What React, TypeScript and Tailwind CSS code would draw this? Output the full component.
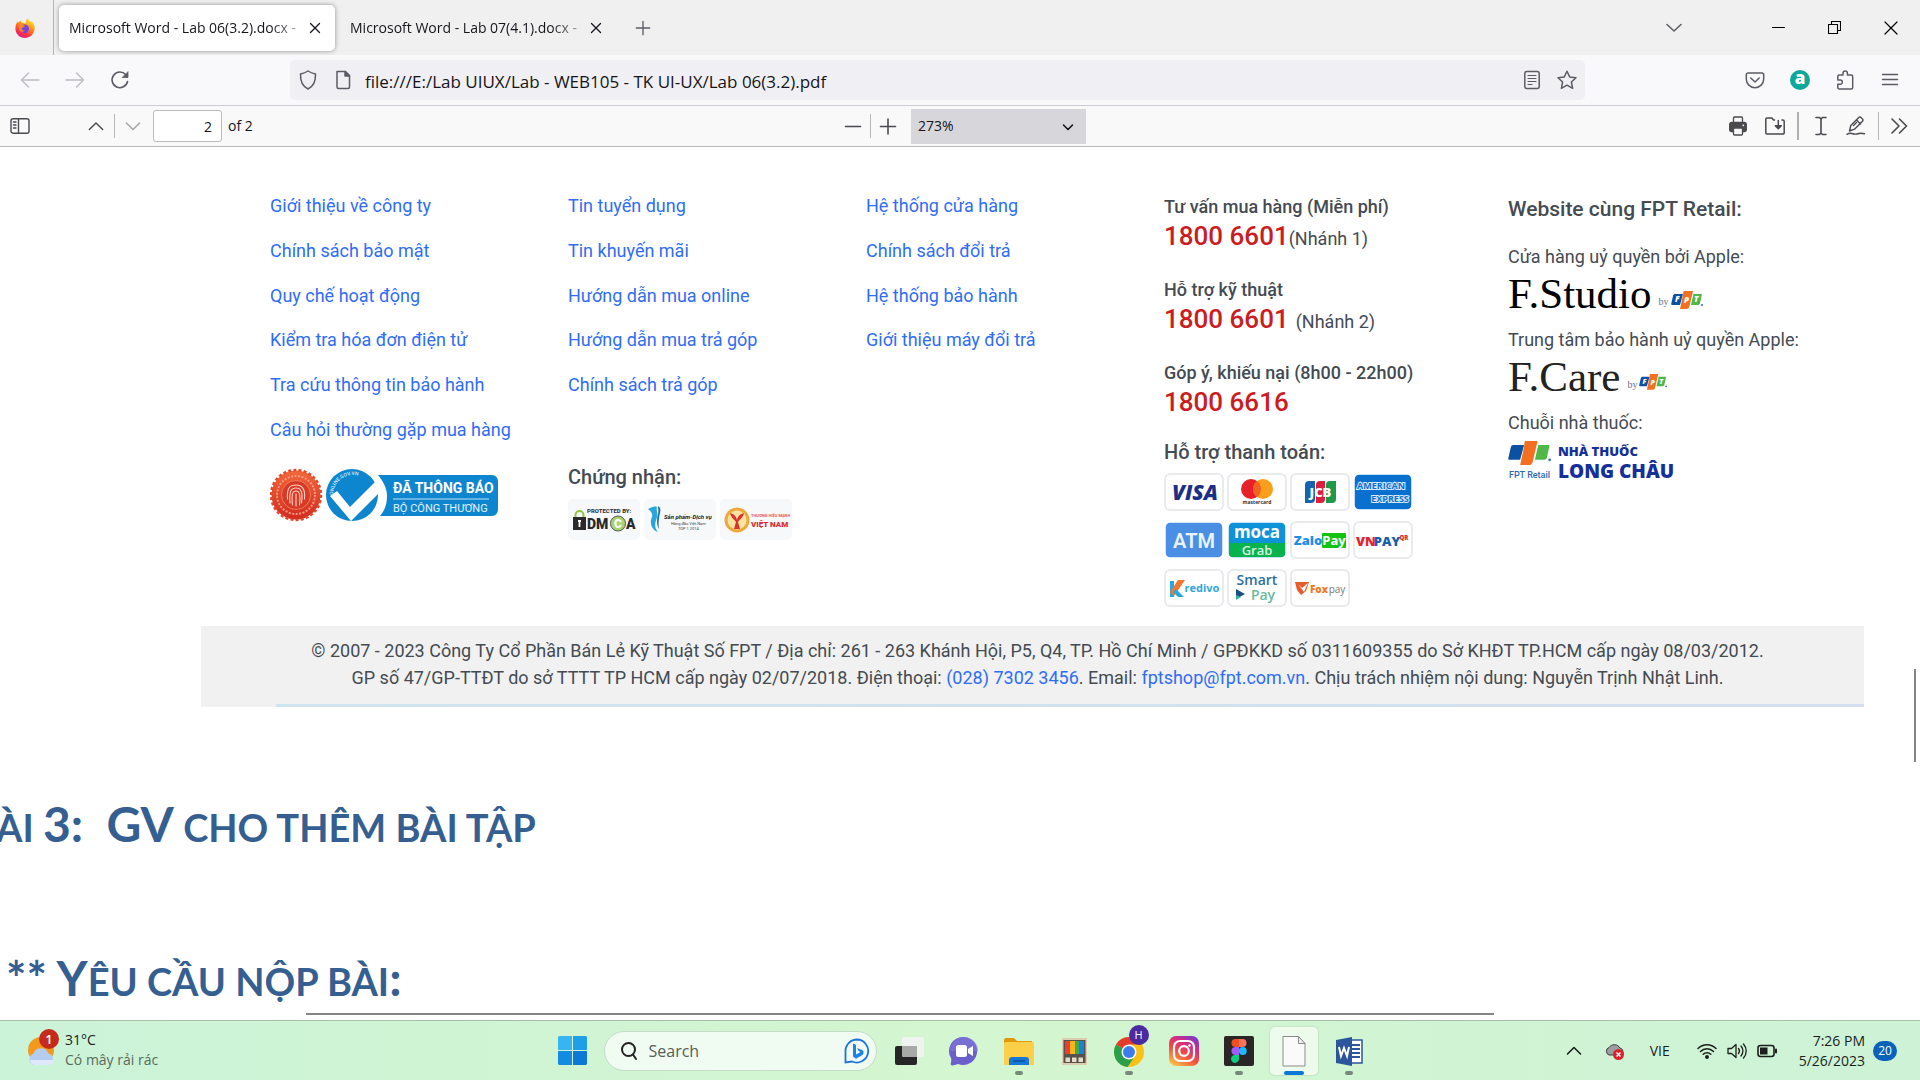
import React from 'react';

type Kids = { children: React.ReactNode };

function Icon({ size = 20, box = 20, width = 1.3, className = '', children }: { size?: number; box?: number; width?: number; className?: string } & Kids) {
  return (
    <svg
      width={size}
      height={size}
      viewBox={`0 0 ${box} ${box}`}
      fill="none"
      stroke="currentColor"
      strokeWidth={width}
      strokeLinecap="round"
      strokeLinejoin="round"
      className={`shrink-0 ${className}`}
      aria-hidden="true"
    >
      {children}
    </svg>
  );
}

function Btn({ label, className = '', children }: { label: string; className?: string } & Kids) {
  return (
    <button type="button" aria-label={label} className={`flex shrink-0 items-center justify-center ${className}`}>
      {children}
    </button>
  );
}

function FirefoxLogo() {
  return (
    <svg width="20" height="20" viewBox="0 0 20 20" className="mr-1 shrink-0" aria-hidden="true">
      <defs>
        <linearGradient id="ff" x1="0.8" y1="0" x2="0.3" y2="1">
          <stop offset="0" stopColor="#fff44f" />
          <stop offset="0.4" stopColor="#ff980e" />
          <stop offset="0.75" stopColor="#ff3647" />
          <stop offset="1" stopColor="#e31587" />
        </linearGradient>
      </defs>
      <path d="M12.5 0c.6 1.700 2 2.500 3.600 4 .2-.6.1-1 .1-1.300C18.500 4.300 20 7.400 19.600 11c-.5 5-4.600 9-9.700 9C4.600 20 .4 15.800.4 10.500.4 7.500 1.700 5 2.400 3.300c.3.6.4 1 .5 1.700C4 3.700 5 3 6.300 2.700c-.2.8-.1 1.500.2 2.100 1.800-.2 3 .2 4 1.200-.2-2.300.5-4.500 2-6z" fill="url(#ff)" />
      <circle cx="9.800" cy="10.800" r="4.200" fill="#7542e5" />
      <path d="M3.500 7.500c2-1.500 4.500-.5 6.500.5-1 1.500-3 1-3.200 2.600-.1 1.500 1.700 2.400 3.300 1.700-1.200 2-4.600 1.900-5.800-.8-.6-1.400-.7-2.700-.8-4z" fill="#ff8a16" />
    </svg>
  );
}

function Tab({ title, active = false }: { title: string; active?: boolean }) {
  return (
    <div className={`flex h-[46px] w-[276px] items-center pr-[10px] pl-[10px] ${active ? 'rounded-[5px] bg-white shadow-[0_0_5px_rgba(0,0,0,0.4)]' : ''}`}>
      <button
        type="button"
        className="min-w-0 flex-1 overflow-hidden bg-linear-to-r from-[#15141a] from-85% to-[#15141a]/20 bg-clip-text text-left text-sm whitespace-nowrap text-transparent"
      >
        {title}
      </button>
      <Btn label="Close tab" className="size-5 text-[#15141a]">
        <Icon size={12} box={12}>
          <path d="M1.500 1.500l9 9M10.500 1.500l-9 9" />
        </Icon>
      </Btn>
    </div>
  );
}

function TitleBar() {
  return (
    <header className="flex h-[55px] shrink-0 items-center bg-[#f0f0f0]">
      <div className="flex h-full w-[54px] items-center justify-center border-r border-[#b4b4b8]">
        <FirefoxLogo />
      </div>
      <div className="flex gap-[5px] pl-[5px]">
        <Tab title="Microsoft Word - Lab 06(3.2).docx -" active />
        <Tab title="Microsoft Word - Lab 07(4.1).docx -" />
      </div>
      <Btn label="New tab" className="ml-3 size-[30px] text-[#5b5b66]">
        <Icon size={16} box={18} width={1.500}>
          <path d="M9 1.500v15M1.500 9h15" />
        </Icon>
      </Btn>
      <div className="flex-1" />
      <Btn label="List all tabs" className="mr-[58px] size-9 text-[#5b5b66]">
        <Icon size={16} box={16} width={1.500}>
          <path d="M1 4.500l7 6.500 7-6.500" />
        </Icon>
      </Btn>
      <Btn label="Minimize" className="h-full w-14 text-black">
        <Icon size={13} box={13} width={1}>
          <path d="M0.500 6.500h12" />
        </Icon>
      </Btn>
      <Btn label="Restore" className="h-full w-14 text-black">
        <Icon size={13} box={13} width={1.100}>
          <path d="M.5 3.500h9v9h-9zM3.500 3.500v-3h9v9h-3" strokeLinejoin="miter" />
        </Icon>
      </Btn>
      <Btn label="Close" className="h-full w-[58px] text-black">
        <Icon size={14} box={14} width={1.200}>
          <path d="M1 1l12 12M13 1L1 13" />
        </Icon>
      </Btn>
    </header>
  );
}

function NavBar() {
  return (
    <nav className="flex h-[51px] shrink-0 items-center border-b border-[#ccccd1] bg-[#f9f9fb] text-[#5b5b66]">
      <div className="flex w-[290px] shrink-0 items-center pl-[15px]">
        <Btn label="Back" className="size-[30px] text-[#bdbdc2]">
          <Icon>
            <path d="M19 10H1.500M8.500 3L1.500 10l7 7" />
          </Icon>
        </Btn>
        <Btn label="Forward" className="ml-[15px] size-[30px] text-[#bdbdc2]">
          <Icon>
            <path d="M1 10h17.500M11.500 3l7 7-7 7" />
          </Icon>
        </Btn>
        <Btn label="Reload" className="ml-[15px] size-[30px]">
          <Icon width={1.600}>
            <path d="M17.500 11.500a7.800 7.800 0 1 1-1.700-6.700" />
            <path d="M18 2v5.500h-5.500z" fill="currentColor" strokeWidth={0.800} />
          </Icon>
        </Btn>
      </div>
      <div className="flex h-10 min-w-0 flex-1 items-center rounded-[5px] bg-[#f0f0f4] px-2">
        <Btn label="Tracking protection" className="size-5">
          <Icon width={1.500}>
            <path d="M10 1c2.500 1.800 5 2.500 7.500 3 .3 6.500-1.500 12-7.500 15C4 16 2.200 10.500 2.500 4 5 3.500 7.500 2.800 10 1z" />
          </Icon>
        </Btn>
        <Btn label="Site information" className="ml-[15px] size-5">
          <Icon width={1.500}>
            <path d="M4 1.500h8.500l4 4V17a1.500 1.500 0 0 1-1.500 1.500H5.500A1.500 1.500 0 0 1 4 17z" />
            <path d="M12 1.500v4.500h4.500z" fill="currentColor" />
          </Icon>
        </Btn>
        <input
          aria-label="Address"
          className="ml-3 min-w-0 flex-1 bg-transparent pt-1 text-[17px] text-[#15141a] outline-none"
          defaultValue="file:///E:/Lab UIUX/Lab - WEB105 - TK UI-UX/Lab 06(3.2).pdf"
        />
        <Btn label="Reader view" className="size-5">
          <Icon width={1.500}>
            <rect x="2.800" y="1.500" width="14.400" height="17" rx="2" />
            <path d="M6 5.500h8M6 8.500h8M6 11.500h8M6 14.500h4" strokeWidth={1.100} />
          </Icon>
        </Btn>
        <Btn label="Bookmark this page" className="ml-[15px] size-5">
          <Icon width={1.500}>
            <path d="M10 1.200l2.700 5.700 6.300.8-4.600 4.300 1.200 6.300L10 15.200l-5.600 3.100L5.600 12 1 7.700l6.300-.8z" />
          </Icon>
        </Btn>
      </div>
      <div className="flex w-[335px] shrink-0 items-center justify-end gap-[25px] pr-5">
        <Btn label="Save to Pocket" className="size-5">
          <Icon width={1.500}>
            <path d="M3 3h14a1.700 1.700 0 0 1 1.700 1.700V9A8.700 8.700 0 0 1 10 17.700 8.700 8.700 0 0 1 1.300 9V4.700A1.700 1.700 0 0 1 3 3z" />
            <path d="M5.800 8l4.200 4 4.200-4" />
          </Icon>
        </Btn>
        <Btn label="Extension" className="size-5 rounded-full bg-[#0da899] text-white">
          <span className="-mt-1 text-[17px] leading-5 font-extrabold">a</span>
        </Btn>
        <Btn label="Extensions" className="size-5">
          <Icon width={1.500}>
            <path d="M2.800 6.500A1.500 1.500 0 0 1 4.300 5H8V3.200a2.200 2.200 0 0 1 4.400 0V5h3.800a1.500 1.500 0 0 1 1.500 1.500v11A1.500 1.500 0 0 1 16.200 19H4.300a1.500 1.500 0 0 1-1.500-1.500v-3.200h2.400a2.100 2.100 0 0 0 0-4.200H2.800z" />
          </Icon>
        </Btn>
        <Btn label="Menu" className="size-5">
          <Icon width={1.400}>
            <path d="M2.500 4.500h15M2.500 9.500h15M2.500 14.500h15" />
          </Icon>
        </Btn>
      </div>
    </nav>
  );
}

function PdfBar() {
  return (
    <div className="flex h-[41px] shrink-0 items-center border-b border-[#b8b8b8] bg-[#f9f9fa] text-sm text-[#4a4a4f]">
      <div className="flex flex-1 items-center pl-[10px]">
        <Btn label="Toggle sidebar" className="size-5">
          <Icon width={1.400}>
            <rect x="1" y="2.800" width="18" height="14.400" rx="2" />
            <path d="M8.500 3v14M3.500 6h2.500M3.500 9h2.500M3.500 12h2.500" />
          </Icon>
        </Btn>
        <Btn label="Previous page" className="ml-14 size-5">
          <Icon size={16} box={18} width={1.600}>
            <path d="M1.500 13L9 5.500l7.500 7.500" />
          </Icon>
        </Btn>
        <span className="mx-2 h-6 w-px bg-[#b8b8b8]" />
        <Btn label="Next page" className="size-5 text-[#a5a5a7]">
          <Icon size={16} box={18} width={1.600}>
            <path d="M1.500 5.500L9 13l7.500-7.500" />
          </Icon>
        </Btn>
        <input
          id="page"
          aria-label="Page"
          className="ml-[10px] h-8 w-[69px] rounded-[3px] border border-[#bbbbbc] bg-white pr-[9px] text-right text-[#15141a] outline-none"
          defaultValue="2"
        />
        <label htmlFor="page" className="ml-[6px] text-[#15141a]">
          of 2
        </label>
      </div>
      <div className="flex items-center pl-[10px]">
        <Btn label="Zoom out" className="size-5">
          <Icon width={1.600}>
            <path d="M2.500 10.500h15" />
          </Icon>
        </Btn>
        <span className="mx-[7px] h-6 w-px bg-[#b8b8b8]" />
        <Btn label="Zoom in" className="size-5">
          <Icon width={1.600}>
            <path d="M2.500 10.500h15M10 3v15" />
          </Icon>
        </Btn>
        <div className="relative ml-[13px]">
          <select aria-label="Zoom" className="block h-[35px] w-[175px] appearance-none bg-[#d7d7db] pl-[7px] text-[#15141a] outline-none" defaultValue="273%">
            <option>273%</option>
          </select>
          <Icon size={12} box={12} width={1.600} className="pointer-events-none absolute top-3 right-3 text-[#15141a]">
            <path d="M1.500 4L6 8.500 10.500 4" />
          </Icon>
        </div>
      </div>
      <div className="flex flex-1 items-center justify-end pr-[11px]">
        <Btn label="Print" className="size-5">
          <Icon>
            <rect x="1.700" y="6.500" width="16.600" height="9" rx="2" fill="currentColor" />
            <rect x="5.500" y="1" width="9" height="5.500" rx="1" fill="#f9f9fa" />
            <rect x="5.500" y="12" width="9" height="7" rx="1" fill="#f9f9fa" />
            <circle cx="15.300" cy="9.300" r="0.900" fill="#f9f9fa" stroke="none" />
          </Icon>
        </Btn>
        <Btn label="Download" className="ml-[17px] size-5">
          <Icon width={1.500}>
            <path d="M9.500 4H8.500L7 2H2A1.200 1.200 0 0 0 .8 3.200v13.600A1.200 1.200 0 0 0 2 18h16a1.200 1.200 0 0 0 1.200-1.200V5.500A1.500 1.500 0 0 0 17.700 4H17" />
            <path d="M13.300 4.500v8M10.300 9.800l3 3 3-3z" fill="currentColor" />
          </Icon>
        </Btn>
        <span className="mr-3 ml-3 h-7 w-0.5 bg-[#b0b0b2]" />
        <Btn label="Text" className="size-5">
          <Icon width={1.600}>
            <path d="M5 1.500h3.500L10 2.800l1.500-1.300H15M5 18.500h3.500l1.500-1.300 1.500 1.300H15M10 3v14" />
          </Icon>
        </Btn>
        <Btn label="Draw" className="ml-[15px] size-5">
          <Icon width={1.400}>
            <path d="M3.500 15l1.300-5.500 8-8a1.500 1.500 0 0 1 2.200 0l1.500 1.500a1.500 1.500 0 0 1 0 2.200l-8 8L3.500 15zM10.500 4l4 4M7.500 9.500l3-3" />
            <path d="M1 18.300c3-2 5-.8 7-.3s3.500 0 5-.5 3-.3 5.500.2" />
          </Icon>
        </Btn>
        <span className="mr-[10px] ml-3 h-7 w-px bg-[#b8b8b8]" />
        <Btn label="Tools" className="size-5">
          <Icon width={1.600}>
            <path d="M3 3l7 7-7 7M10.500 3l7 7-7 7" />
          </Icon>
        </Btn>
      </div>
    </div>
  );
}

function Links({ items }: { items: string[] }) {
  return (
    <ul className="grid h-[268px] grid-rows-6 items-center text-lg leading-6 text-[#2f6df6]">
      {items.map((t) => (
        <li key={t}>
          <a href="#">{t}</a>
        </li>
      ))}
    </ul>
  );
}

function TradeLogos() {
  return (
    <svg width="230" height="54" viewBox="0 0 230 54" className="mt-4" fontFamily="Roboto" role="img" aria-label="Đã thông báo Bộ Công Thương">
      <defs>
        <linearGradient id="seal" x1="0" y1="0" x2="0" y2="1">
          <stop offset="0" stopColor="#f2683a" />
          <stop offset="1" stopColor="#d22a20" />
        </linearGradient>
      </defs>
      <circle cx="26" cy="27" r="24.500" fill="url(#seal)" />
      <circle cx="26" cy="27" r="25" fill="none" stroke="#e04a2c" strokeWidth="2.500" strokeDasharray="3 2.200" />
      <circle cx="26" cy="27" r="19" fill="none" stroke="#f39a7e" strokeWidth="2" strokeDasharray="2 1.500" />
      <circle cx="26" cy="27" r="14.500" fill="#d93a26" stroke="#f08a6c" strokeWidth="0.800" />
      <g fill="none" stroke="#ffd3c4" strokeWidth="1.100" strokeLinecap="round">
        <path d="M17.500 31c-1-12 3-14 8.500-14s9.500 3 8.500 14M20 35c-1-11 .5-15 6-15s7 5 5.500 15M22.500 37c-1-10-.5-14 3.500-14s4.500 5 3.500 14M26 26v12" />
      </g>
      <path d="M108 7h114a6 6 0 0 1 6 6v29a6 6 0 0 1-6 6H110c5-6 7-12 7-20s-4-15-9-21z" fill="#0e86cf" />
      <circle cx="82" cy="27" r="26" fill="#0e86cf" />
      <path d="M60 28l7-5 13 16 27-27c5 6 3 12 0 15L81 53z" fill="#fff" />
      <path id="arc" d="M63 27a20 20 0 0 1 36-12l3 5" fill="none" />
      <text fill="#d8ecf8" fontSize="5" fontWeight="500">
        <textPath href="#arc">ONLINE.GOV.VN</textPath>
      </text>
      <text x="123" y="25" fill="#fff" fontSize="14" fontWeight="700">
        ĐÃ THÔNG BÁO
      </text>
      <path d="M123 31h96" stroke="#bfe0f4" />
      <text x="123" y="44" fill="#e3f2fb" fontSize="11">
        BỘ CÔNG THƯƠNG
      </text>
    </svg>
  );
}

function CertTile({ label, children }: { label: string } & Kids) {
  return (
    <svg width="72" height="41" viewBox="0 0 72 41" fontFamily="Roboto" role="img" aria-label={label}>
      <rect width="72" height="41" rx="5" fill="#f7f8fa" />
      {children}
    </svg>
  );
}

function Certificates() {
  return (
    <div className="mt-[10px] flex gap-1">
      <CertTile label="DMCA">
        <text x="19" y="14" fontSize="6" fontWeight="800" fill="#333">
          PROTECTED BY:
        </text>
        <path d="M7.500 19v-3a4 4 0 0 1 8 0v3" fill="none" stroke="#8fc73e" strokeWidth="2" />
        <rect x="5" y="18" width="13" height="13" fill="#2a2a2a" />
        <path d="M11.500 21v7M10 22h3" stroke="#fff" strokeWidth="1.800" />
        <circle cx="50" cy="24.500" r="7.500" fill="#a8d46f" stroke="#555" strokeWidth="1" />
        <text x="19" y="30" fontSize="14" fontWeight="900" fill="#2a2a2a">
          DM
        </text>
        <text x="50" y="29" textAnchor="middle" fontSize="12" fontWeight="900" fill="#fff">
          C
        </text>
        <text x="58" y="30" fontSize="14" fontWeight="900" fill="#2a2a2a">
          A
        </text>
      </CertTile>
      <CertTile label="Sản phẩm Dịch vụ">
        <path d="M4 10c4-2 6-3 9-2-1 4 1 6 0 10s-4 9 1 15c-8-3-8-11-6-15 1-3-1-6-4-8z" fill="#2aa5da" />
        <path d="M14 7c2 1 3 3 2 7s-2 11-1 16c-3-5-2-11-1-15s0-5 0-8z" fill="#1670a8" />
        <text x="20" y="20" fontSize="6" fontWeight="700" fontStyle="italic" fill="#222">
          Sản phẩm-Dịch vụ
        </text>
        <text x="27" y="26" fontSize="4" fill="#444">
          Hàng đầu Việt Nam
        </text>
        <text x="34" y="31" fontSize="4" fill="#444">
          TOP 1 2014
        </text>
      </CertTile>
      <CertTile label="Hàng Việt Nam">
        <circle cx="17" cy="21" r="12.500" fill="#eda93d" />
        <circle cx="17" cy="21" r="9.500" fill="#fbe3a3" />
        <path d="M10 14c4 1 6 3 7 7 1-4 3-6 7-7-1 5-5 7-6 9l2 7h-6l2-7c-1-2-5-4-6-9z" fill="#d8342b" />
        <text x="31" y="18" fontSize="4" fontWeight="700" fill="#e7575a">
          THƯƠNG HIỆU MẠNH
        </text>
        <text x="31" y="28" fontSize="8" fontWeight="900" fill="#dd2c33">
          VIỆT NAM
        </text>
      </CertTile>
    </div>
  );
}

function PayTile({ label, fill = '#fff', stroke = '#e3e5e8', children }: { label: string; fill?: string; stroke?: string } & Kids) {
  return (
    <svg width="60" height="38" viewBox="0 0 60 38" fontFamily="Open Sans" textAnchor="middle" role="img" aria-label={label}>
      <rect x="1" y="1" width="58" height="36" rx="5" fill={fill} stroke={stroke} strokeWidth="1.500" />
      {children}
    </svg>
  );
}

function Payments() {
  return (
    <div className="mt-[7px] grid w-max grid-cols-4 gap-x-[3px] gap-y-[10px]">
      <PayTile label="Visa">
        <text x="31" y="27" fontSize="21" fontWeight="800" fontStyle="italic" fill="#1c2f87">
          VISA
        </text>
      </PayTile>
      <PayTile label="Mastercard">
        <circle cx="24" cy="16" r="10" fill="#e8202a" />
        <circle cx="36" cy="16" r="10" fill="#f99f1b" />
        <path d="M30 8a10 10 0 0 1 0 16 10 10 0 0 1 0-16z" fill="#f26322" />
        <text x="30" y="31" fontSize="5" fontWeight="700" fill="#333">
          mastercard
        </text>
      </PayTile>
      <PayTile label="JCB">
        <path d="M15 12a4 4 0 0 1 4-4h6v18a4 4 0 0 1-4 4h-6z" fill="#1763ae" />
        <path d="M26 12a4 4 0 0 1 4-4h5v18a4 4 0 0 1-4 4h-5z" fill="#dc1f3f" />
        <path d="M36 12a4 4 0 0 1 4-4h6v18a4 4 0 0 1-4 4h-6z" fill="#1c9a48" />
        <text x="30.500" y="24" fontSize="13" fontWeight="800" fill="#fff">
          JCB
        </text>
      </PayTile>
      <PayTile label="American Express" fill="#0a70d0" stroke="#fff">
        <g fontSize="9" fontWeight="700" fill="#0a70d0" stroke="#d7eafb" strokeWidth="2" paintOrder="stroke">
          <text x="28" y="16">AMERICAN</text>
          <text x="37" y="29">EXPRESS</text>
        </g>
      </PayTile>
      <PayTile label="ATM" fill="#4a8fe3" stroke="#fff">
        <text x="30" y="27" fontSize="20" fontWeight="600" fill="#eaf3ff" fontFamily="Roboto">
          ATM
        </text>
      </PayTile>
      <PayTile label="Moca Grab" fill="#0f93d8" stroke="#fff">
        <path d="M2 22h56v10a4 4 0 0 1-4 4H6a4 4 0 0 1-4-4z" fill="#06b34c" />
        <text x="30" y="17" fontSize="17" fontWeight="700" fill="#fff">
          moca
        </text>
        <text x="30" y="34" fontSize="13" fontWeight="600" fill="#d9f7e3">
          Grab
        </text>
      </PayTile>
      <PayTile label="ZaloPay">
        <rect x="32" y="12" width="24" height="15" rx="1" fill="#12c312" />
        <text x="18" y="24" fontSize="13" fontWeight="800" fill="#1b8ee8">
          Zalo
        </text>
        <text x="44" y="24" fontSize="13" fontWeight="700" fill="#fff">
          Pay
        </text>
      </PayTile>
      <PayTile label="VNPAY QR">
        <text x="13" y="25" fontSize="13" fontWeight="800" fill="#e52330">
          VN
        </text>
        <text x="34" y="25" fontSize="13" fontWeight="800" fill="#1a5fa8">
          PAY
        </text>
        <text x="51" y="19" fontSize="6" fontWeight="800" fill="#e52330">
          QR
        </text>
      </PayTile>
      <PayTile label="Kredivo">
        <path d="M6 12h4v16H6z" fill="#27a8df" />
        <path d="M6 23L14 11h7L10 27z" fill="#f5762e" />
        <path d="M12 20l8 8h-6l-5-5z" fill="#27a8df" />
        <text x="38" y="23" fontSize="11" fontWeight="700" fill="#2fa9dc">
          redivo
        </text>
      </PayTile>
      <PayTile label="Smart Pay">
        <text x="30" y="16" fontSize="14" fontWeight="600" fill="#2c6e9f">
          Smart
        </text>
        <path d="M9 20l9 5-9 5z" fill="#1c4f86" />
        <path d="M9 26l5 2-5 3z" fill="#36b39b" />
        <text x="36" y="31" fontSize="14" fontWeight="600" fill="#6cb99b">
          Pay
        </text>
      </PayTile>
      <PayTile label="Foxpay">
        <path d="M5 13h14l-3 9-5 4-4-5z" fill="#e6592b" />
        <path d="M8 15l4 4 6-5-4 9z" fill="#fff" />
        <text x="29" y="24" fontSize="10" fontWeight="800" fill="#f07a22">
          Fox
        </text>
        <text x="47" y="24" fontSize="10" fontWeight="400" fill="#777">
          pay
        </text>
      </PayTile>
    </div>
  );
}

function FptMark({ width = 32, letters = true }: { width?: number; letters?: boolean }) {
  return (
    <svg width={width} height={(width * 18) / 32} viewBox="0 0 32 18" className="shrink-0" fontFamily="Open Sans" fontWeight="800" fontStyle="italic" role="img" aria-label="FPT">
      <path d="M4 3h8L9 14H1.500C0 14 0 13 .4 12L2 5c.4-1.500 1-2 2-2z" fill="#0a51a1" />
      <path d="M13 0h9l-3.500 15c-.5 2-1.500 3-3 3H9l3-14c.4-2 0-4 1-4z" fill="#f36f21" />
      <path d="M22.500 3H31l-2 9c-.4 1.500-1 2-2.500 2H20z" fill="#50b848" />
      <circle cx="31" cy="14" r="1" fill="#2a6bb5" />
      {letters && (
        <g fill="#fff" fontSize="8">
          <text x="4" y="11">F</text>
          <text x="13" y="12">P</text>
          <text x="23" y="11">T</text>
        </g>
      )}
    </svg>
  );
}

function SerifLogo({ name, color, mark }: { name: string; color: string; mark: number }) {
  return (
    <div className="flex h-[59px] items-start">
      <span className={`font-['Liberation_Serif'] text-[43px] leading-[50px] ${color}`}>{name}</span>
      <span className="mt-[25px] ml-[7px] font-['Liberation_Serif'] text-[10px] leading-4 text-gray-500">by</span>
      <span className="mt-[22px] ml-0.5">
        <FptMark width={mark} />
      </span>
    </div>
  );
}

function Hotline({ title, number, branch = '', className = '' }: { title: string; number: string; branch?: string; className?: string }) {
  return (
    <div className="mb-6">
      <p className="text-lg leading-[27px] font-medium">{title}</p>
      <p className="flex h-8 items-baseline leading-8">
        <span className="text-[26px] font-medium text-[#cb1c22]">{number}</span>
        <span className={`text-lg leading-8 ${className}`}>{branch}</span>
      </p>
    </div>
  );
}

function ShopFooter() {
  return (
    <section className="mr-14 ml-[201px] pt-[37px] font-[Roboto] text-[#444b52]">
      <div className="grid h-[442px] grid-cols-[298fr_298fr_298fr_344fr_356fr] pl-[69px]">
        <div>
          <Links
            items={['Giới thiệu về công ty', 'Chính sách bảo mật', 'Quy chế hoạt động', 'Kiểm tra hóa đơn điện tử', 'Tra cứu thông tin bảo hành', 'Câu hỏi thường gặp mua hàng']}
          />
          <TradeLogos />
        </div>
        <div>
          <Links items={['Tin tuyển dụng', 'Tin khuyến mãi', 'Hướng dẫn mua online', 'Hướng dẫn mua trả góp', 'Chính sách trả góp']} />
          <h3 className="mt-[13px] text-xl leading-6 font-medium">Chứng nhận:</h3>
          <Certificates />
        </div>
        <div>
          <Links items={['Hệ thống cửa hàng', 'Chính sách đổi trả', 'Hệ thống bảo hành', 'Giới thiệu máy đổi trả']} />
        </div>
        <div className="pt-[9px]">
          <Hotline title="Tư vấn mua hàng (Miễn phí)" number="1800 6601" branch="(Nhánh 1)" />
          <Hotline title="Hỗ trợ kỹ thuật" number="1800 6601" branch="(Nhánh 2)" className="ml-[7px]" />
          <Hotline title="Góp ý, khiếu nại (8h00 - 22h00)" number="1800 6616" />
          <h3 className="-mt-1 text-xl leading-7 font-medium">Hỗ trợ thanh toán:</h3>
          <Payments />
        </div>
        <div className="pt-[11px] text-lg leading-6">
          <h3 className="mb-[22px] text-[21px] leading-7 font-medium">Website cùng FPT Retail:</h3>
          <p>Cửa hàng uỷ quyền bởi Apple:</p>
          <SerifLogo name="F.Studio" color="text-black" mark={32} />
          <p>Trung tâm bảo hành uỷ quyền Apple:</p>
          <SerifLogo name="F.Care" color="text-[#222]" mark={28} />
          <p>Chuỗi nhà thuốc:</p>
          <div className="mt-1.5 flex gap-[7px]">
            <div className="flex w-[43px] flex-col items-center">
              <FptMark width={43} letters={false} />
              <span className="mt-1 text-[9px] leading-3 font-medium whitespace-nowrap text-[#2a6bb5]">FPT Retail</span>
            </div>
            <div className="font-['Open_Sans'] font-extrabold text-[#15309a]">
              <p className="text-[13px] leading-5">NHÀ THUỐC</p>
              <p className="text-[19px] leading-5">LONG CHÂU</p>
            </div>
          </div>
        </div>
      </div>
      <div className="h-[81px] bg-[#f1f1f1] pt-[11px] text-center text-lg leading-[27px]">
        <p className="pl-[10px]">
          © 2007 - 2023 Công Ty Cổ Phần Bán Lẻ Kỹ Thuật Số FPT / Địa chỉ: 261 - 263 Khánh Hội, P5, Q4, TP. Hồ Chí Minh / GPĐKKD số 0311609355 do Sở KHĐT TP.HCM cấp ngày 08/03/2012.
        </p>
        <p className="pl-[10px]">
          GP số 47/GP-TTĐT do sở TTTT TP HCM cấp ngày 02/07/2018. Điện thoại:{' '}
          <a href="#" className="text-[#2f6df6]">
            (028) 7302 3456
          </a>
          . Email:{' '}
          <a href="#" className="text-[#2f6df6]">
            fptshop@fpt.com.vn
          </a>
          . Chịu trách nhiệm nội dung: Nguyễn Trịnh Nhật Linh.
        </p>
        <div className="mt-[13px] ml-[75px] h-[3px] bg-linear-to-r from-[#cfe4ee] to-[#d3dfee]" />
      </div>
    </section>
  );
}

function Document() {
  return (
    <main className="relative min-h-0 flex-1 overflow-hidden bg-white">
      <ShopFooter />
      <div className="font-[Lato] text-[38px] leading-[60px] font-bold whitespace-pre text-[#365f91]">
        <h2 className="mt-[87px] -ml-1">
          ÀI <span className="text-5xl leading-[60px]">3:  GV</span> CHO THÊM BÀI TẬP
        </h2>
        <h2 className="mt-[91px] ml-1.5">
          <span className="text-5xl leading-[60px]">** Y</span>ÊU CẦU NỘP BÀI<span className="text-5xl leading-[60px]">:</span>
        </h2>
      </div>
      <hr className="mt-0.5 mr-[426px] ml-[306px] border-t-2 border-[#858585]" />
      <div className="absolute top-[522px] right-1 h-[93px] w-0.5 bg-[#858585]" />
    </main>
  );
}

function AppCell({ label, mark = '', active = false, children }: { label: string; mark?: string; active?: boolean } & Kids) {
  return (
    <button type="button" aria-label={label} className={`relative flex size-12 shrink-0 items-center justify-center rounded-[5px] ${active ? 'bg-white/60 shadow-[0_0_2px_rgba(0,0,0,0.2)]' : ''}`}>
      <svg width="34" height="34" viewBox="0 0 34 34" aria-hidden="true">
        {children}
      </svg>
      {mark && <span className={`absolute bottom-0 h-1 rounded-full ${mark}`} />}
    </button>
  );
}

const RUNNING = 'w-2 bg-[#758a78]';

function TaskApps() {
  return (
    <div className="flex gap-[7px]">
      <AppCell label="Task view">
        <rect x="3" y="12" width="22" height="19" rx="2" fill="#262626" />
        <rect x="10" y="3" width="22" height="20" rx="2" fill="#f1f3f1" opacity="0.93" />
        <path d="M10 12h15v11H12a2 2 0 0 1-2-2z" fill="#a7aaa7" />
      </AppCell>
      <AppCell label="Chat">
        <path d="M17 3a14 14 0 1 1-6 27c-3 1-6 2-7 1s1-4 0-7A14 14 0 0 1 17 3z" fill="#6a5fcb" />
        <path d="M17 3a14 14 0 0 1 14 14H3A14 14 0 0 1 17 3z" fill="#8478d8" opacity="0.6" />
        <rect x="9" y="11" width="11" height="12" rx="2.500" fill="#fff" />
        <path d="M21 15l5-3v10l-5-3z" fill="#fff" />
      </AppCell>
      <AppCell label="File Explorer" mark={RUNNING}>
        <path d="M2 6a2 2 0 0 1 2-2h8l3 3h15v8H2z" fill="#dc9a0c" />
        <rect x="2" y="8" width="30" height="23" rx="1.500" fill="#fbcf47" />
        <path d="M7 31v-5a3 3 0 0 1 3-3h14a3 3 0 0 1 3 3v5z" fill="#1478d4" />
        <path d="M11 27h12" stroke="#0b4f9b" strokeWidth="1.500" />
      </AppCell>
      <AppCell label="PowerToys">
        <rect x="5" y="4" width="25" height="27" fill="#dccdb2" />
        <rect x="6.500" y="6" width="22" height="23" fill="#57514b" />
        <path d="M8 7h5v13H8z" fill="#e8412b" />
        <path d="M13 7h5v13h-5z" fill="#f8b41a" />
        <path d="M18 7h4.500v13H18z" fill="#3fae49" />
        <path d="M22.500 7H27v13h-4.500z" fill="#1a82d8" />
        <path d="M8.500 23.500h4.500V28H8.500zM15 23.500h4.500V28H15zM21.500 23.500H26V28h-4.500z" fill="#e6dcc8" />
      </AppCell>
      <AppCell label="Chrome" mark={RUNNING}>
        <circle cx="17" cy="18" r="15" fill="#fbc116" />
        <path d="M17 18L4 10.500A15 15 0 0 1 30 10.500H17z" fill="#e33b2e" />
        <path d="M17 18L4 10.500A15 15 0 0 0 15.500 33L23 22z" fill="#2aa04b" />
        <circle cx="17" cy="18" r="7.500" fill="#fff" />
        <circle cx="17" cy="18" r="6" fill="#3b7ded" />
      </AppCell>
      <AppCell label="Instagram">
        <defs>
          <linearGradient id="ig" x1="0.200" y1="1" x2="0.800" y2="0">
            <stop offset="0" stopColor="#fdc045" />
            <stop offset="0.400" stopColor="#f2503f" />
            <stop offset="0.700" stopColor="#d62a83" />
            <stop offset="1" stopColor="#7b3bc9" />
          </linearGradient>
        </defs>
        <rect x="2" y="2" width="30" height="30" rx="7" fill="url(#ig)" />
        <g fill="none" stroke="#fff" strokeWidth="2.200">
          <rect x="7" y="7" width="20" height="20" rx="6" />
          <circle cx="17" cy="17" r="4.800" />
        </g>
        <circle cx="22.500" cy="11.500" r="1.300" fill="#fff" />
      </AppCell>
      <AppCell label="Figma" mark={RUNNING}>
        <rect x="2" y="2" width="30" height="30" rx="2" fill="#2a2626" />
        <path d="M17 5h-3.500a4 4 0 0 0 0 8H17z" fill="#f24e1e" />
        <path d="M17 5h3.500a4 4 0 0 1 0 8H17z" fill="#ff7262" />
        <path d="M17 13h-3.500a4 4 0 0 0 0 8H17z" fill="#a259ff" />
        <circle cx="20.800" cy="17" r="3.900" fill="#1abcfe" />
        <path d="M17 21h-3.500a4 4 0 1 0 3.500 4z" fill="#0acf83" />
      </AppCell>
      <AppCell label="Document" active mark="w-5 bg-[#0a78d4]">
        <path d="M6 2.500h15.500L28 9.500V32H6z" fill="#fafafa" stroke="#8b8b8b" strokeWidth="1" />
        <path d="M21.500 2.500v7H28z" fill="#eee" stroke="#8b8b8b" strokeWidth="1" />
      </AppCell>
      <AppCell label="Word" mark={RUNNING}>
        <path d="M17 6h13v23H17z" fill="#fff" stroke="#2b579a" strokeWidth="1.500" />
        <path d="M19 11h9M19 15h9M19 19h9M19 23h9" stroke="#2b579a" strokeWidth="2" />
        <path d="M4 6l16-3v29L4 29z" fill="#2b579a" />
        <path d="M7 13l2 9 3-8 3 8 2-9" fill="none" stroke="#fff" strokeWidth="2" />
      </AppCell>
    </div>
  );
}

function TaskBar() {
  return (
    <footer className="flex h-[60px] shrink-0 items-center border-t border-[#a9bfac] bg-linear-to-r from-[#cbf3d8] via-[#d4f6d0] to-[#cdf2d6] text-sm text-[#1b1f1c]">
      <div className="flex flex-1 items-center gap-2 pb-0.5 pl-[27px]">
        <svg width="32" height="38" viewBox="0 0 32 38" className="-mt-1 shrink-0" aria-hidden="true">
          <circle cx="14" cy="21" r="13" fill="#f39a1e" />
          <path d="M7 36a6 6 0 0 1-.5-11.500 8 8 0 0 1 15 0A6 6 0 0 1 22 36z" fill="#b5cdf3" />
          <path d="M7 36a6 6 0 0 1-4-5h24a6 6 0 0 1-5 5z" fill="#dfe9fb" />
          <circle cx="22" cy="10" r="10" fill="#c42b1c" />
          <text x="22" y="15" textAnchor="middle" fontSize="13" fontWeight="600" fill="#fff">
            1
          </text>
        </svg>
        <div className="-ml-0.5 leading-5">
          <p>31°C</p>
          <p className="text-[#5a6b5d]">Có mây rải rác</p>
        </div>
      </div>
      <div className="flex items-center pl-1.5">
        <Btn label="Start" className="size-[29px]">
          <svg width="29" height="29" viewBox="0 0 29 29" aria-hidden="true">
            <path d="M1 0h13v14H0V1z" fill="#36b5f0" />
            <path d="M15 0h13l1 1v13H15z" fill="#1fa0e6" />
            <path d="M0 15h14v14H1l-1-1z" fill="#128be0" />
            <path d="M15 15h14v13l-1 1H15z" fill="#0a78d4" />
          </svg>
        </Btn>
        <label className="mr-2 ml-[17px] flex h-10 w-[273px] items-center rounded-full border border-[#c3dcc6] bg-[#f0fbf1] pr-1.5 pl-3">
          <Icon width={2} className="text-[#222]">
            <circle cx="11.500" cy="8.500" r="6.500" />
            <path d="M7 13.500L1.500 19" className="hidden" />
            <path d="M16 13.500l3 4.500" />
          </Icon>
          <input aria-label="Search" placeholder="Search" className="ml-3 min-w-0 flex-1 bg-transparent text-base outline-none placeholder:text-[#565f58]" />
          <svg width="26" height="26" viewBox="0 0 26 26" className="shrink-0" aria-hidden="true">
            <path d="M13 1.500a11.500 11.500 0 1 1-5 22L1.500 24.500V13A11.500 11.500 0 0 1 13 1.500z" fill="#f4fbff" stroke="#1c74d8" strokeWidth="1.800" />
            <path d="M9 5.500l3 1.200v9.800l4.500-2.500-2-1-1.300-3 5.300 2.200c1.500 1 1.500 3.500 0 4.700L12 20.800l-3-2.200z" fill="#1a86e0" />
          </svg>
        </label>
        <div className="relative">
          <TaskApps />
          <span className="absolute -top-0.5 left-[244px] flex size-5 items-center justify-center rounded-full bg-[#4a2ba0] text-[11px] text-white">H</span>
        </div>
      </div>
      <div className="flex flex-1 items-center justify-end pr-[23px]">
        <Btn label="Show hidden icons" className="size-5">
          <Icon size={16} box={16} width={1.600}>
            <path d="M1.500 11L8 4.500l6.500 6.500" />
          </Icon>
        </Btn>
        <Btn label="OneDrive" className="ml-5 size-5">
          <svg width="20" height="20" viewBox="0 0 20 20" aria-hidden="true">
            <path d="M5 14a4 4 0 0 1 0-7.500A6.500 6.500 0 0 1 16 7a4 4 0 0 1 3 4v3z" fill="#9d9d9d" stroke="#3d3d3d" />
            <circle cx="14.500" cy="13.500" r="5.500" fill="#d8232f" />
            <path d="M12.500 11.500l4 4M16.500 11.500l-4 4" stroke="#fff" strokeWidth="1.400" />
          </svg>
        </Btn>
        <Btn label="Input language" className="ml-[26px]">
          VIE
        </Btn>
        <Btn label="Network, volume and battery" className="ml-[27px] gap-[10px]">
          <Icon width={1.500}>
            <path d="M1 7.500a12.500 12.500 0 0 1 18 0M3.500 10.500a9 9 0 0 1 13 0M6.200 13.200a5.500 5.500 0 0 1 7.600 0" />
            <circle cx="10" cy="16" r="1.200" fill="currentColor" />
          </Icon>
          <Icon width={1.300}>
            <path d="M1 7.500h3.500L9 3.500v13l-4.500-4H1zM11.500 7.500a4 4 0 0 1 0 5M14 5a7.500 7.500 0 0 1 0 10M16.500 3a10.500 10.500 0 0 1 0 14" />
          </Icon>
          <Icon width={1.600}>
            <rect x="1" y="4.500" width="16" height="11" rx="2.500" />
            <rect x="3" y="6.500" width="7.500" height="7" fill="currentColor" stroke="none" />
            <path d="M19 8.500v3" strokeWidth={2} />
          </Icon>
        </Btn>
        <div className="ml-[22px] text-right leading-5">
          <p>7:26 PM</p>
          <p>5/26/2023</p>
        </div>
        <Btn label="Notifications" className="ml-2 h-5 w-6 rounded-full bg-[#0a63b9] text-xs text-white">
          20
        </Btn>
      </div>
    </footer>
  );
}

export default function App() {
  return (
    <div className="flex h-screen flex-col overflow-hidden bg-white font-['Open_Sans',sans-serif]">
      <TitleBar />
      <NavBar />
      <PdfBar />
      <Document />
      <TaskBar />
    </div>
  );
}
